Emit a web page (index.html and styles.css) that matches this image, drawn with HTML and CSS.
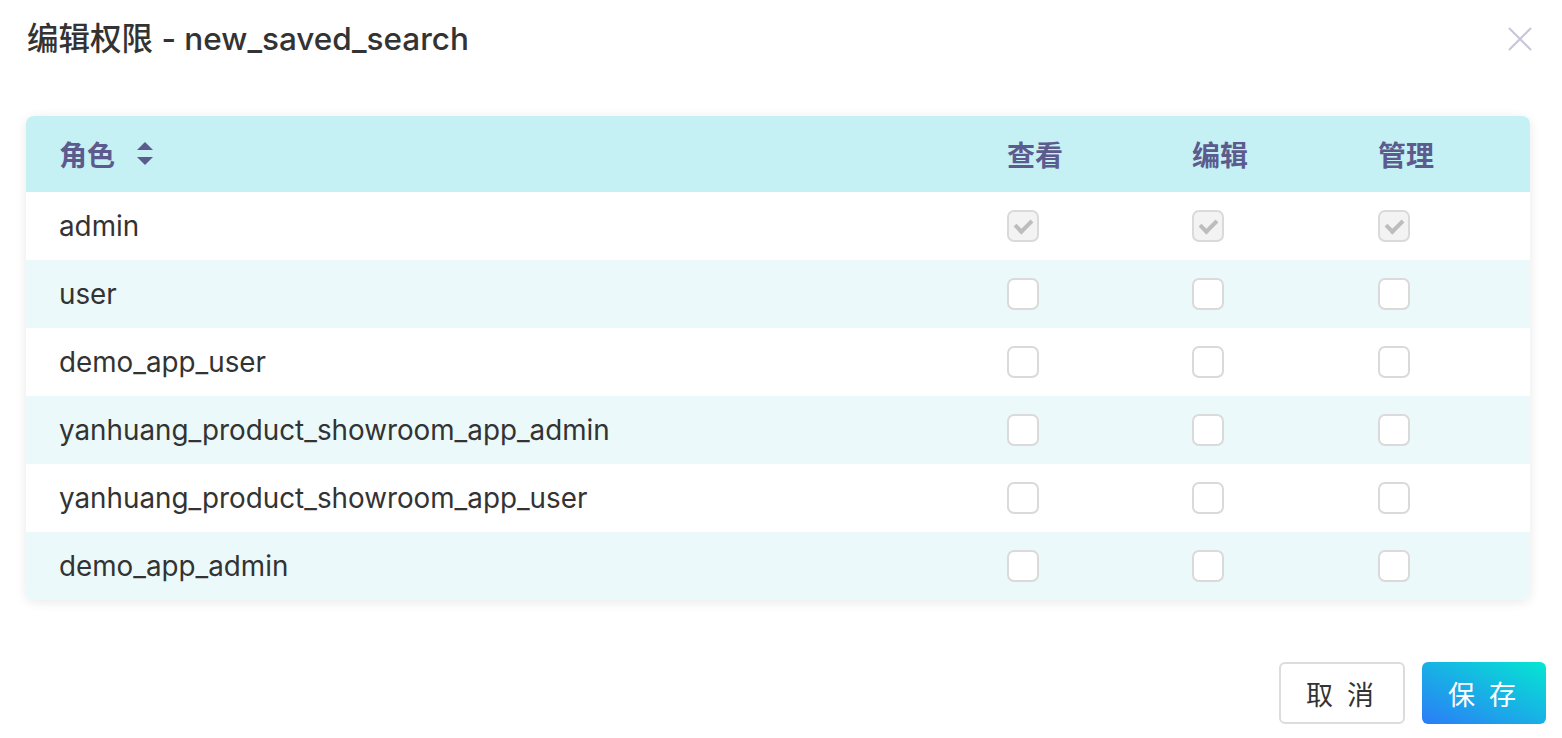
FILE: index.html
```html
<!DOCTYPE html>
<html lang="zh-CN">
<head>
    <meta charset="UTF-8">
    <title>编辑权限 - new_saved_search</title>
    <link rel="stylesheet" href="styles.css">
</head>
<body>
    <div class="dialog">
        <div class="dialog-header">
            <h2 class="dialog-title">编辑权限 - new_saved_search</h2>
            <button class="close-btn" aria-label="关闭">
                <svg width="24" height="24" viewBox="0 0 24 24"><path d="M1 1L23 23M23 1L1 23" stroke="#c6c6d8" stroke-width="2" fill="none"/></svg>
            </button>
        </div>

        <div class="perm-table">
            <div class="perm-row head">
                <div class="cell role">角色
                    <svg class="sorter" width="16" height="24" viewBox="0 0 16 24"><path d="M8 0L16 8H0Z M0 15H16L8 23Z" fill="#5d5b8d"/></svg>
                </div>
                <div class="cell">查看</div>
                <div class="cell">编辑</div>
                <div class="cell">管理</div>
            </div>
            <div class="perm-row">
                <div class="cell role">admin</div>
                <div class="cell"><span class="check checked"></span></div>
                <div class="cell"><span class="check checked"></span></div>
                <div class="cell"><span class="check checked"></span></div>
            </div>
            <div class="perm-row">
                <div class="cell role">user</div>
                <div class="cell"><span class="check"></span></div>
                <div class="cell"><span class="check"></span></div>
                <div class="cell"><span class="check"></span></div>
            </div>
            <div class="perm-row">
                <div class="cell role">demo_app_user</div>
                <div class="cell"><span class="check"></span></div>
                <div class="cell"><span class="check"></span></div>
                <div class="cell"><span class="check"></span></div>
            </div>
            <div class="perm-row">
                <div class="cell role">yanhuang_product_showroom_app_admin</div>
                <div class="cell"><span class="check"></span></div>
                <div class="cell"><span class="check"></span></div>
                <div class="cell"><span class="check"></span></div>
            </div>
            <div class="perm-row">
                <div class="cell role">yanhuang_product_showroom_app_user</div>
                <div class="cell"><span class="check"></span></div>
                <div class="cell"><span class="check"></span></div>
                <div class="cell"><span class="check"></span></div>
            </div>
            <div class="perm-row">
                <div class="cell role">demo_app_admin</div>
                <div class="cell"><span class="check"></span></div>
                <div class="cell"><span class="check"></span></div>
                <div class="cell"><span class="check"></span></div>
            </div>
        </div>

        <div class="dialog-footer">
            <button class="btn btn-cancel">取 消</button>
            <button class="btn btn-primary">保 存</button>
        </div>
    </div>
</body>
</html>
```

FILE: styles.css
```css
body {
    margin: 0;
    background-color: #fff;
    font-family: "Inter", "Noto Sans CJK SC", sans-serif;
    color: #333;
}
.dialog {
    width: 1562px;
    height: 738px;
    box-sizing: border-box;
    padding: 0 16px 0 26px;
}
.dialog-header {
    display: flex;
    align-items: center;
    justify-content: space-between;
    height: 78px;
}
.dialog-title {
    margin: 0 0 6px 1px;
    font-size: 31.5px;
    font-weight: 500;
    color: #333;
}
.close-btn {
    background: none;
    border: none;
    padding: 0;
    margin-right: 14px;
    margin-top: 2px;
    cursor: pointer;
}
.perm-table {
    margin-top: 38px;
    width: 1504px;
    border-radius: 8px;
    overflow: hidden;
    box-shadow: 0 2px 12px rgba(0, 0, 0, 0.09);
}
.perm-row {
    display: grid;
    grid-template-columns: 1fr 185px 186px 152px;
    align-items: center;
    height: 68px;
    padding-left: 33px;
    font-size: 27.8px;
    background-color: #fff;
}
.perm-row:nth-child(odd) {
    background-color: #ebf9fb;
}
.perm-row.head {
    height: 76px;
    background-color: #c5f1f5;
    color: #5d5b8d;
    font-weight: 700;
    font-size: 28px;
}
.cell {
    display: flex;
    align-items: center;
}
.sorter {
    margin-left: 22px;
}
.check {
    display: inline-block;
    width: 32px;
    height: 32px;
    box-sizing: border-box;
    border: 2px solid #dadada;
    border-radius: 7px;
    background-color: #fff;
    position: relative;
}
.check.checked {
    background-color: #f3f3f3;
}
.check.checked::after {
    content: "";
    position: absolute;
    left: 9px;
    top: 4px;
    width: 7px;
    height: 13px;
    border: solid #bdbdbd;
    border-width: 0 4px 4px 0;
    transform: rotate(45deg);
}
.dialog-footer {
    display: flex;
    justify-content: flex-end;
    gap: 17px;
    margin-top: 62px;
}
.btn {
    height: 62px;
    width: 124px;
    border-radius: 6px;
    font-size: 27px;
    font-family: "Noto Sans CJK SC", sans-serif;
    letter-spacing: 4px;
    cursor: pointer;
}
.btn-cancel {
    width: 126px;
    background-color: #fff;
    border: 2px solid #dcdcdc;
    color: #333;
}
.btn-primary {
    border: none;
    color: #fff;
    background: linear-gradient(to top right, #2b7cf8, #05e6d2);
}
```
